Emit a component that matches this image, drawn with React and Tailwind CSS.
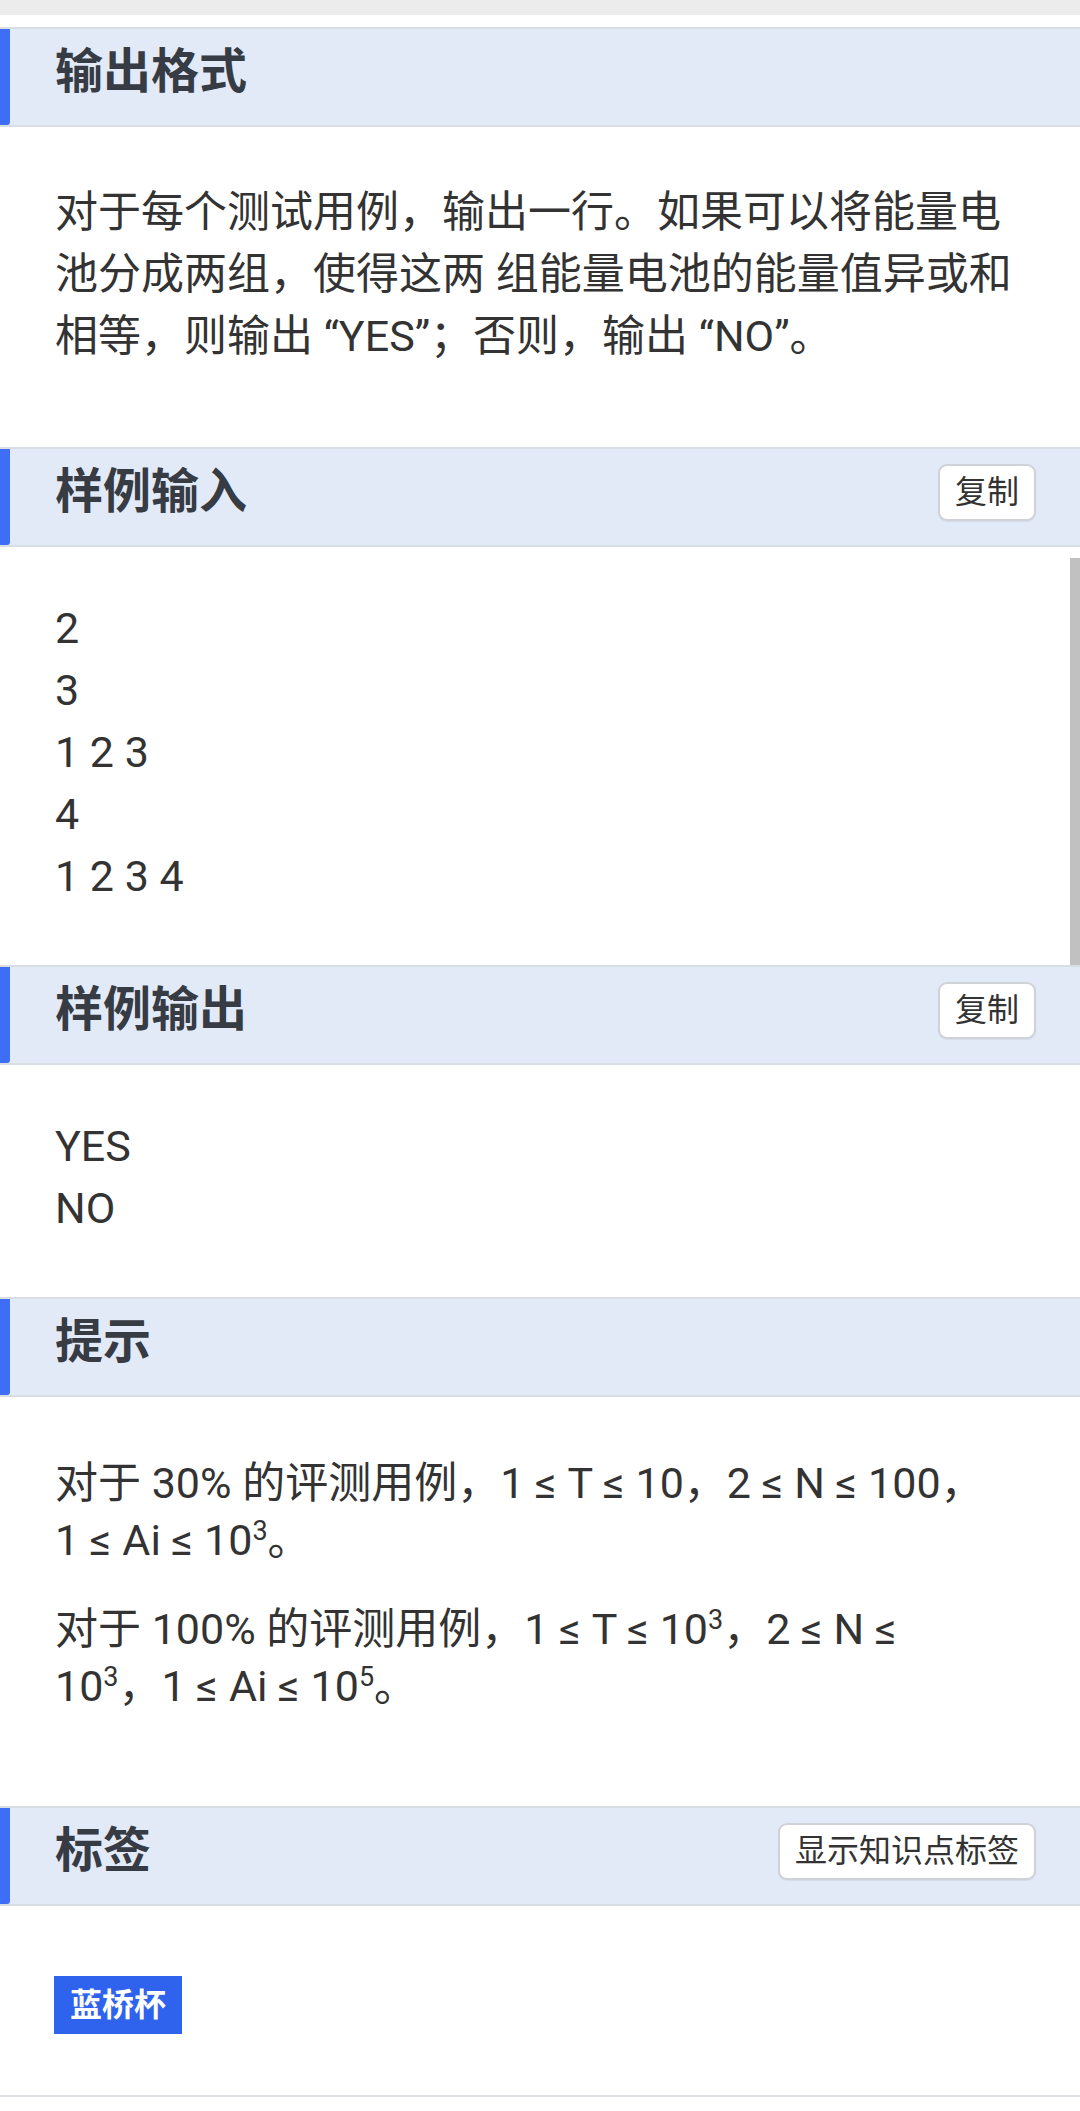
import React from "react";

const FONT = "font-['Roboto','Noto_Sans_CJK_SC',sans-serif]";

function Btn({ children }) {
  return (
    <div className="h-[57px] px-[15px] flex items-center bg-white border-2 border-[#cfd2d6] rounded-[9px] text-[32px] text-[#333333] leading-none shadow-[0_1px_1px_rgba(0,0,0,0.06)]">
      {children}
    </div>
  );
}

function Header({ title, action }) {
  return (
    <div className="flex h-[100px] bg-[#e3eaf7] border-y-2 border-[#d9dde4]">
      <div className="w-[10px] self-stretch bg-[#3d6ef5] rounded-br-[3px]" />
      <div className="flex-1 flex items-center justify-between pl-[45px] pr-[44px] pb-[10px]">
        <div className="text-[48px] font-bold text-[#363b44] leading-none">{title}</div>
        {action ? <Btn>{action}</Btn> : null}
      </div>
    </div>
  );
}

function Sup({ children }) {
  return <sup className="text-[27px] top-[-0.55em]">{children}</sup>;
}

export default function App() {
  return (
    <div className={`w-[1080px] min-h-[2111px] bg-white ${FONT} text-[#333333]`}>
      <div className="h-[15px] bg-[#ececec]" />
      <div className="h-[12px]" />

      <Header title="输出格式" />
      <div className="pl-[55px] pr-[55px] pt-[54px] pb-[80px] text-[43px] leading-[62px]">
        <p>
          对于每个测试用例，输出一行。如果可以将能量电
          <br />
          池分成两组，使得这两 组能量电池的能量值异或和
          <br />
          相等，则输出 “YES”；否则，输出 “NO”。
        </p>
      </div>

      <Header title="样例输入" action="复制" />
      <div className="relative pl-[55px] pt-[50px] pb-[58px] text-[43px] leading-[62px]">
        <div>2</div>
        <div>3</div>
        <div>1 2 3</div>
        <div>4</div>
        <div>1 2 3 4</div>
        <div className="absolute right-0 top-[11px] w-[10px] h-[407px] bg-[#c1c1c1]" />
      </div>

      <Header title="样例输出" action="复制" />
      <div className="pl-[55px] pt-[50px] pb-[58px] text-[43px] leading-[62px]">
        <div>YES</div>
        <div>NO</div>
      </div>

      <Header title="提示" />
      <div className="pl-[55px] pr-[40px] pt-[58px] pb-[91px] text-[43px] leading-[57px]">
        <p className="whitespace-nowrap">
          对于 30% 的评测用例，1 ≤ T ≤ 10，2 ≤ N ≤ 100，
          <br />
          1 ≤ Ai ≤ 10<Sup>3</Sup>。
        </p>
        <p className="mt-[32px] whitespace-nowrap">
          对于 100% 的评测用例，1 ≤ T ≤ 10<Sup>3</Sup>，2 ≤ N ≤
          <br />
          10<Sup>3</Sup>，1 ≤ Ai ≤ 10<Sup>5</Sup>。
        </p>
      </div>

      <Header title="标签" action="显示知识点标签" />
      <div className="pl-[54px] pt-[70px] pb-[61px] border-b-2 border-[#dcdfe4]">
        <div className="inline-flex items-center h-[58px] px-[16px] bg-[#2f63ee] text-white text-[32px] font-bold leading-none">
          蓝桥杯
        </div>
      </div>
    </div>
  );
}
